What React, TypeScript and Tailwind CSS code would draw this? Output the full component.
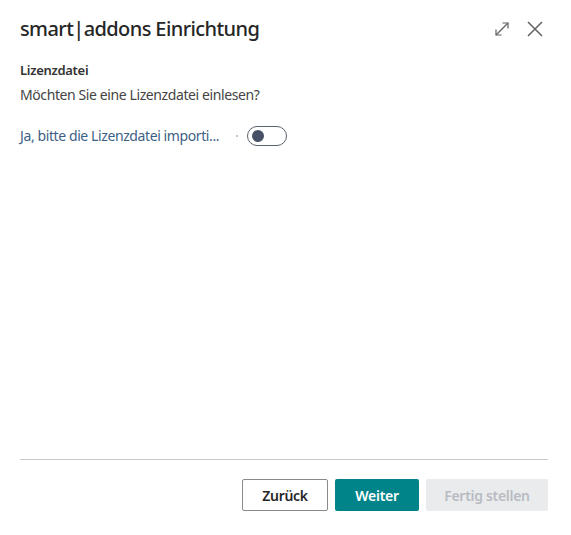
export default function App() {
  return (
    <div
      className="w-[571px] h-[535px] bg-white flex flex-col px-5 text-[#212121]"
      style={{ fontFamily: '"Noto Sans", "Open Sans", sans-serif' }}
    >
      {/* Header */}
      <div className="flex items-center justify-between pt-[14px]">
        <h1 className="text-[20px] leading-[30px] font-medium tracking-[-0.6px] text-[#262626]">smart|addons Einrichtung</h1>
        <div className="flex items-center gap-[16px] mr-[7px]">
          <svg width="16" height="16" viewBox="0 0 16 16" fill="none" stroke="#616161" strokeWidth="1.2">
            <path d="M2 14 L14 2" />
            <path d="M8.5 2 H14 V7.5" />
            <path d="M2 8.5 V14 H7.5" />
          </svg>
          <svg width="18" height="18" viewBox="0 0 18 18" fill="none" stroke="#616161" strokeWidth="1.5">
            <path d="M2 2 L16 16 M16 2 L2 16" />
          </svg>
        </div>
      </div>

      {/* Content */}
      <div className="mt-[17px]">
        <div className="text-[13px] leading-[18px] font-semibold tracking-[-0.3px] text-[#333]">Lizenzdatei</div>
        <div className="mt-[6px] text-[14px] leading-[20px] tracking-[-0.4px] text-[#444]">Möchten Sie eine Lizenzdatei einlesen?</div>
        <div className="mt-[21px] flex items-center h-[20px]">
          <span className="w-[203px] text-[14px] leading-[20px] tracking-[-0.4px] text-[#3d5f86] whitespace-nowrap">Ja, bitte die Lizenzdatei importi...</span>
          <span className="ml-[13px] w-[2px] h-[2px] bg-[#c8c8c8]" />
          <div className="ml-[9px] w-[40px] h-[20px] rounded-full border border-[#5a6270] flex items-center pl-[4px]">
            <div className="w-[12px] h-[12px] rounded-full bg-[#475166]" />
          </div>
        </div>
      </div>

      {/* Footer */}
      <div className="mt-auto pb-[24px]">
        <div className="h-px bg-[#c8c8c8] mr-[3px]" />
        <div className="mt-[19px] flex justify-end gap-[7px] mr-[3px]">
          <button className="w-[86px] h-[32px] rounded-[2px] border border-[#8a8a8a] bg-white text-[14px] font-semibold tracking-[-0.3px] text-[#262626]">
            Zurück
          </button>
          <button className="w-[84px] h-[32px] rounded-[2px] bg-[#008489] text-[14px] font-semibold tracking-[-0.3px] text-white">
            Weiter
          </button>
          <button className="w-[122px] h-[32px] rounded-[2px] bg-[#eaebed] text-[14px] font-semibold tracking-[-0.3px] text-[#b8bcc2]">
            Fertig stellen
          </button>
        </div>
      </div>
    </div>
  )
}
